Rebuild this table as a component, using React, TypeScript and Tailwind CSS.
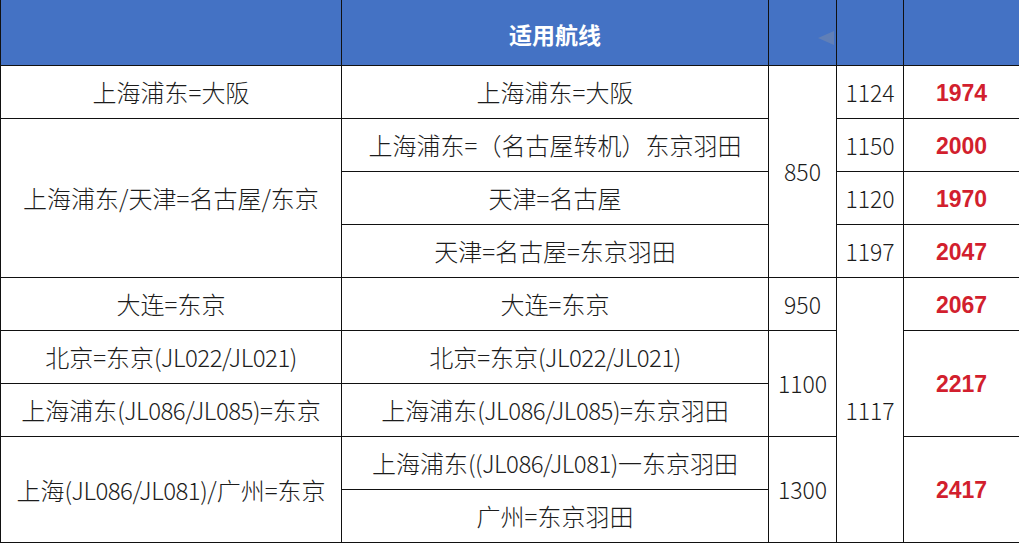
import React from 'react';

type Cell = {
  text?: string;
  col: string;
  row: string;
  kind?: 'route' | 'num' | 'price';
};

const cells: Cell[] = [
  // 出发/到达
  { text: '上海浦东=大阪', col: 'col-start-1', row: 'row-start-2 row-span-1' },
  { text: '上海浦东/天津=名古屋/东京', col: 'col-start-1', row: 'row-start-3 row-span-3' },
  { text: '大连=东京', col: 'col-start-1', row: 'row-start-6 row-span-1' },
  { text: '北京=东京(JL022/JL021)', col: 'col-start-1', row: 'row-start-7 row-span-1' },
  { text: '上海浦东(JL086/JL085)=东京', col: 'col-start-1', row: 'row-start-8 row-span-1' },
  { text: '上海(JL086/JL081)/广州=东京', col: 'col-start-1', row: 'row-start-9 row-span-2' },

  // 适用航线
  { text: '上海浦东=大阪', col: 'col-start-2', row: 'row-start-2 row-span-1' },
  { text: '上海浦东=（名古屋转机）东京羽田', col: 'col-start-2', row: 'row-start-3 row-span-1' },
  { text: '天津=名古屋', col: 'col-start-2', row: 'row-start-4 row-span-1' },
  { text: '天津=名古屋=东京羽田', col: 'col-start-2', row: 'row-start-5 row-span-1' },
  { text: '大连=东京', col: 'col-start-2', row: 'row-start-6 row-span-1' },
  { text: '北京=东京(JL022/JL021)', col: 'col-start-2', row: 'row-start-7 row-span-1' },
  { text: '上海浦东(JL086/JL085)=东京羽田', col: 'col-start-2', row: 'row-start-8 row-span-1' },
  { text: '上海浦东((JL086/JL081)一东京羽田', col: 'col-start-2', row: 'row-start-9 row-span-1' },
  { text: '广州=东京羽田', col: 'col-start-2', row: 'row-start-10 row-span-1' },

  // 票价
  { text: '850', col: 'col-start-3', row: 'row-start-2 row-span-4', kind: 'num' },
  { text: '950', col: 'col-start-3', row: 'row-start-6 row-span-1', kind: 'num' },
  { text: '1100', col: 'col-start-3', row: 'row-start-7 row-span-2', kind: 'num' },
  { text: '1300', col: 'col-start-3', row: 'row-start-9 row-span-2', kind: 'num' },

  // 税费
  { text: '1124', col: 'col-start-4', row: 'row-start-2 row-span-1', kind: 'num' },
  { text: '1150', col: 'col-start-4', row: 'row-start-3 row-span-1', kind: 'num' },
  { text: '1120', col: 'col-start-4', row: 'row-start-4 row-span-1', kind: 'num' },
  { text: '1197', col: 'col-start-4', row: 'row-start-5 row-span-1', kind: 'num' },
  { text: '1117', col: 'col-start-4', row: 'row-start-6 row-span-5', kind: 'num' },

  // 合计
  { text: '1974', col: 'col-start-5', row: 'row-start-2 row-span-1', kind: 'price' },
  { text: '2000', col: 'col-start-5', row: 'row-start-3 row-span-1', kind: 'price' },
  { text: '1970', col: 'col-start-5', row: 'row-start-4 row-span-1', kind: 'price' },
  { text: '2047', col: 'col-start-5', row: 'row-start-5 row-span-1', kind: 'price' },
  { text: '2067', col: 'col-start-5', row: 'row-start-6 row-span-1', kind: 'price' },
  { text: '2217', col: 'col-start-5', row: 'row-start-7 row-span-2', kind: 'price' },
  { text: '2417', col: 'col-start-5', row: 'row-start-9 row-span-2', kind: 'price' },
];

const headers = ['', '适用航线', '', '', ''];

const kindClass = (kind?: Cell['kind']) => {
  if (kind === 'price') return "text-[#d21f2e] font-bold text-[23px] pt-[2px] [font-family:'Liberation_Sans',Arial,sans-serif]";
  if (kind === 'num') return 'text-[#1c1c1c] font-light text-[23px]';
  return 'text-[#1c1c1c] font-light text-[24px]';
};

// flight numbers in brackets set a bit tighter, like the original sheet font
const RouteText = ({ text }: { text: string }) => {
  const parts = text.split(/(\([^)]*\))/);
  return (
    <span>
      {parts.map((p, i) =>
        p.startsWith('(') ? (
          <span key={i} className="tracking-[-0.5px]">
            {p}
          </span>
        ) : (
          <React.Fragment key={i}>{p}</React.Fragment>
        )
      )}
    </span>
  );
};

export default function App() {
  return (
    <div className="w-[1019px] h-[543px] bg-white overflow-hidden">
      <div className="grid grid-cols-[340px_426px_67px_66px_115px] grid-rows-[65px_repeat(9,52px)] gap-px bg-[#111] pl-px pb-px [font-family:'Noto_Sans_CJK_SC','Noto_Sans',sans-serif]">
        {headers.map((h, i) => (
          <div
            key={i}
            className="relative row-start-1 bg-[#4472c4] flex items-center justify-center text-white font-bold text-[23px] pt-[3px]"
          >
            {h}
            {i === 2 && (
              <svg
                className="absolute right-[2px] top-[31px] opacity-40"
                width="18"
                height="14"
                viewBox="0 0 18 14"
              >
                <polygon points="18,0 18,14 2,7" fill="#8a93a6" />
              </svg>
            )}
          </div>
        ))}
        {cells.map((c, i) => (
          <div
            key={i}
            className={`${c.col} ${c.row} bg-white flex items-center justify-center ${kindClass(c.kind)}`}
          >
            {c.kind ? c.text : <RouteText text={c.text ?? ''} />}
          </div>
        ))}
      </div>
    </div>
  );
}
